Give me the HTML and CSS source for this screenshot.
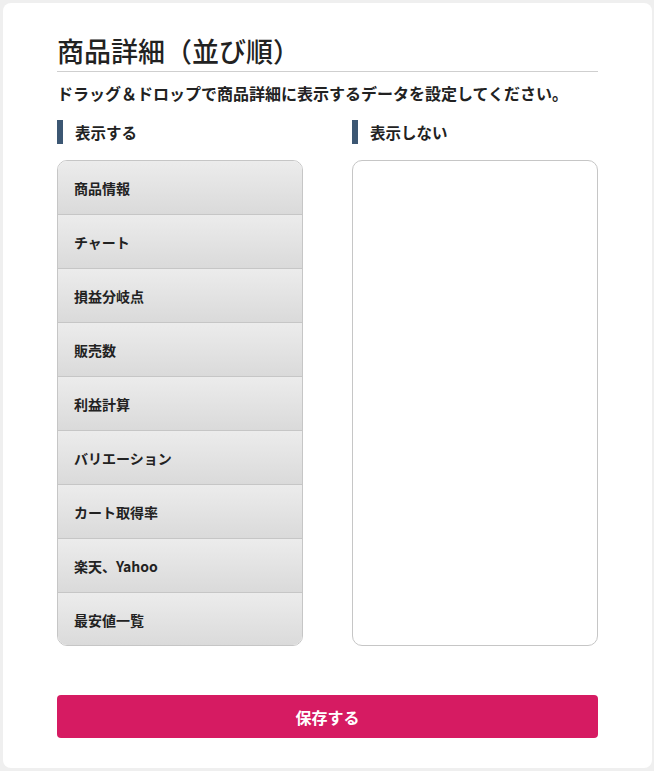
FILE: index.html
```html
<!DOCTYPE html>
<html lang="ja">

<head>
    <meta charset="UTF-8">
    <meta name="viewport" content="width=device-width, initial-scale=1.0">
    <title>商品詳細（並び順）</title>
    <link rel="stylesheet" href="styles.css">
</head>

<body>
    <div class="card">
        <h1>商品詳細（並び順）</h1>
        <p class="lead">ドラッグ＆ドロップで商品詳細に表示するデータを設定してください。</p>

        <div class="columns">
            <div class="column">
                <h2>表示する</h2>
                <ul class="sort-list">
                    <li>商品情報</li>
                    <li>チャート</li>
                    <li>損益分岐点</li>
                    <li>販売数</li>
                    <li>利益計算</li>
                    <li>バリエーション</li>
                    <li>カート取得率</li>
                    <li>楽天、Yahoo</li>
                    <li>最安値一覧</li>
                </ul>
            </div>
            <div class="column">
                <h2>表示しない</h2>
                <ul class="sort-list"></ul>
            </div>
        </div>

        <button type="button" class="save">保存する</button>
    </div>
</body>

</html>
```

FILE: styles.css
```css
body {
    margin: 0;
    padding: 3px 2px 3px 3px;
    background-color: #efefef;
    font-family: "Noto Sans CJK JP", "Noto Sans", sans-serif;
    color: #222;
}

.card {
    background: #fff;
    border-radius: 8px;
    padding: 30px 54px 30px 54px;
    min-height: 705px;
}

h1 {
    margin: 0;
    font-size: 27px;
    font-weight: 500;
    line-height: 36px;
    padding-bottom: 2px;
    border-bottom: 1px solid #cfcfcf;
}

.lead {
    margin: 9px 0 0;
    font-size: 16px;
    font-weight: 700;
    line-height: 24px;
}

.columns {
    display: grid;
    grid-template-columns: 1fr 1fr;
    column-gap: 49px;
    margin-top: 15px;
}

h2 {
    margin: 0 0 16px;
    font-size: 15.5px;
    font-weight: 700;
    line-height: 24px;
    padding-left: 12px;
    border-left: 6px solid #3c5773;
}

.sort-list {
    list-style: none;
    margin: 0;
    padding: 0;
    height: 486px;
    box-sizing: border-box;
    border: 1px solid #c6c6c6;
    border-radius: 10px;
    overflow: hidden;
}

.sort-list li {
    height: 54px;
    box-sizing: border-box;
    padding-left: 16px;
    display: flex;
    align-items: center;
    font-size: 14px;
    font-weight: 700;
    color: #222;
    background: linear-gradient(#ececec, #dadada);
    border-bottom: 1px solid #c6c6c6;
}

.sort-list li:last-child {
    border-bottom: none;
}

.save {
    display: block;
    width: 100%;
    height: 43px;
    margin-top: 49px;
    border: none;
    border-radius: 4px;
    background-color: #d61b62;
    color: #fff;
    font-family: inherit;
    font-size: 16px;
    font-weight: 700;
    cursor: pointer;
}
```
